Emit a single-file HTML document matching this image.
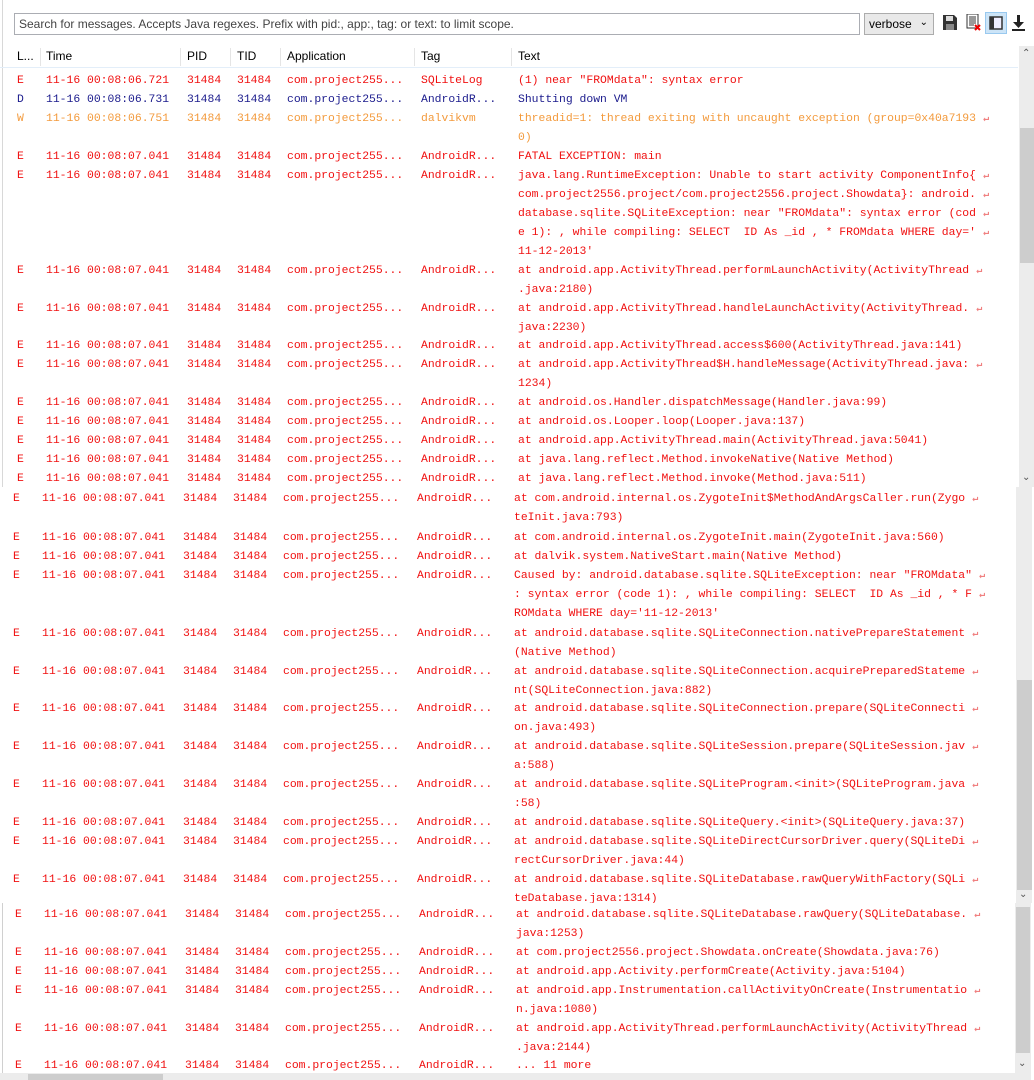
<!DOCTYPE html>
<html><head><meta charset="utf-8"><style>
*{margin:0;padding:0;box-sizing:border-box}
body{width:1034px;height:1080px;background:#fff;position:relative;overflow:hidden;font-family:"Liberation Mono",monospace;font-size:11.4px}
.ui{font-family:"Liberation Sans",sans-serif;font-size:12px;color:#000}
.p{position:absolute;left:0;width:1034px;overflow:hidden}
.r{position:absolute;left:0;width:1010px;line-height:19px;white-space:pre}
.r span{position:absolute;top:0}
.a{left:17px}.b{left:46px}.c{left:187px}.d{left:237px}.e{left:287px}.f{left:421px}.g{left:518px}
.E{color:#f01010}.D{color:#1a1a8c}.W{color:#f39a3c}
.w{color:#f08080;font-size:10px;margin-left:7px}
.sb{position:absolute;background:#ececec}
.th{position:absolute;background:#cdcdcd}
.ar{position:absolute;font-family:"Liberation Sans",sans-serif;font-size:10px;color:#555}
.rows{position:absolute;left:0;top:2px;width:1034px;height:100%}
</style></head><body>
<div class="ui" style="position:absolute;left:2px;top:0;width:1px;height:487px;background:#d8d8d8"></div>
<div class="ui" style="position:absolute;left:14px;top:13px;width:846px;height:22px;border:1px solid #abadb3;padding:2px 4px;line-height:16px;color:#444">Search for messages. Accepts Java regexes. Prefix with pid:, app:, tag: or text: to limit scope.</div>
<div class="ui" style="position:absolute;left:864px;top:13px;width:70px;height:22px;border:1px solid #acacac;background:#e9e9e9;padding:2px 4px;line-height:16px">verbose<span style="position:absolute;right:5px;top:1px;font-size:10px">&#8964;</span></div>
<svg style="position:absolute;left:943px;top:15px" width="14" height="15" viewBox="0 0 14 15"><path d="M0 0h11l3 3v12H0z" fill="#333"/><rect x="3" y="1" width="7" height="5" fill="#ddd"/><rect x="3" y="9" width="8" height="6" fill="#888"/></svg>
<svg style="position:absolute;left:966px;top:14px" width="16" height="18" viewBox="0 0 16 18"><rect x="1" y="0" width="11" height="14" fill="#fff" stroke="#333"/><path d="M3 3h7M3 5h7M3 7h7M3 9h7M3 11h5" stroke="#333"/><path d="M9 11l5 5M14 11l-5 5" stroke="#e00" stroke-width="2"/></svg>
<div style="position:absolute;left:985px;top:12px;width:22px;height:22px;background:#cce4f7;border:1px solid #99c9ef"></div>
<svg style="position:absolute;left:989px;top:16px" width="14" height="14" viewBox="0 0 14 14"><rect x="1" y="1" width="12" height="12" fill="#eef" stroke="#333" stroke-width="1.5"/><rect x="1" y="1" width="4" height="12" fill="#333"/></svg>
<svg style="position:absolute;left:1012px;top:15px" width="13" height="16" viewBox="0 0 13 16"><path d="M5 0h3v7h4l-5.5 6L1 7h4z" fill="#222"/><rect x="0" y="14" width="13" height="2" fill="#222"/></svg>

<div class="p" style="top:0;height:487px">
<div class="ui" style="position:absolute;top:46px;left:0;width:1018px;height:22px;border-bottom:1px solid #e3eef9;line-height:21px">
<span style="position:absolute;left:17px">L...</span><span style="position:absolute;left:46px">Time</span><span style="position:absolute;left:187px">PID</span><span style="position:absolute;left:237px">TID</span><span style="position:absolute;left:287px">Application</span><span style="position:absolute;left:421px">Tag</span><span style="position:absolute;left:518px">Text</span>
<i style="position:absolute;left:40px;top:2px;height:18px;border-left:1px solid #e5e5e5"></i><i style="position:absolute;left:180px;top:2px;height:18px;border-left:1px solid #e5e5e5"></i><i style="position:absolute;left:230px;top:2px;height:18px;border-left:1px solid #e5e5e5"></i><i style="position:absolute;left:280px;top:2px;height:18px;border-left:1px solid #e5e5e5"></i><i style="position:absolute;left:414px;top:2px;height:18px;border-left:1px solid #e5e5e5"></i><i style="position:absolute;left:511px;top:2px;height:18px;border-left:1px solid #e5e5e5"></i>
</div>
<div class="sb" style="left:1019px;top:46px;width:15px;height:441px"></div>
<div class="th" style="left:1020px;top:128px;width:14px;height:135px"></div>
<div class="ar" style="left:1022px;top:48px">&#8963;</div>
<div class="ar" style="left:1022px;top:472px">&#8964;</div>
<div class="rows">
<div class="r E" style="top:70px"><span class="a">E</span><span class="b">11-16 00:08:06.721</span><span class="c">31484</span><span class="d">31484</span><span class="e">com.project255...</span><span class="f">SQLiteLog</span><span class="g">(1) near "FROMdata": syntax error</span></div>
<div class="r D" style="top:89px"><span class="a">D</span><span class="b">11-16 00:08:06.731</span><span class="c">31484</span><span class="d">31484</span><span class="e">com.project255...</span><span class="f">AndroidR...</span><span class="g">Shutting down VM</span></div>
<div class="r W" style="top:108px"><span class="a">W</span><span class="b">11-16 00:08:06.751</span><span class="c">31484</span><span class="d">31484</span><span class="e">com.project255...</span><span class="f">dalvikvm</span><span class="g">threadid=1: thread exiting with uncaught exception (group=0x40a7193<b class="w">&#8629;</b>
0)</span></div>
<div class="r E" style="top:146px"><span class="a">E</span><span class="b">11-16 00:08:07.041</span><span class="c">31484</span><span class="d">31484</span><span class="e">com.project255...</span><span class="f">AndroidR...</span><span class="g">FATAL EXCEPTION: main</span></div>
<div class="r E" style="top:165px"><span class="a">E</span><span class="b">11-16 00:08:07.041</span><span class="c">31484</span><span class="d">31484</span><span class="e">com.project255...</span><span class="f">AndroidR...</span><span class="g">java.lang.RuntimeException: Unable to start activity ComponentInfo{<b class="w">&#8629;</b>
com.project2556.project/com.project2556.project.Showdata}: android.<b class="w">&#8629;</b>
database.sqlite.SQLiteException: near "FROMdata": syntax error (cod<b class="w">&#8629;</b>
e 1): , while compiling: SELECT  ID As _id , * FROMdata WHERE day='<b class="w">&#8629;</b>
11-12-2013'</span></div>
<div class="r E" style="top:260px"><span class="a">E</span><span class="b">11-16 00:08:07.041</span><span class="c">31484</span><span class="d">31484</span><span class="e">com.project255...</span><span class="f">AndroidR...</span><span class="g">at android.app.ActivityThread.performLaunchActivity(ActivityThread<b class="w">&#8629;</b>
.java:2180)</span></div>
<div class="r E" style="top:298px"><span class="a">E</span><span class="b">11-16 00:08:07.041</span><span class="c">31484</span><span class="d">31484</span><span class="e">com.project255...</span><span class="f">AndroidR...</span><span class="g">at android.app.ActivityThread.handleLaunchActivity(ActivityThread.<b class="w">&#8629;</b>
java:2230)</span></div>
<div class="r E" style="top:335px"><span class="a">E</span><span class="b">11-16 00:08:07.041</span><span class="c">31484</span><span class="d">31484</span><span class="e">com.project255...</span><span class="f">AndroidR...</span><span class="g">at android.app.ActivityThread.access$600(ActivityThread.java:141)</span></div>
<div class="r E" style="top:354px"><span class="a">E</span><span class="b">11-16 00:08:07.041</span><span class="c">31484</span><span class="d">31484</span><span class="e">com.project255...</span><span class="f">AndroidR...</span><span class="g">at android.app.ActivityThread$H.handleMessage(ActivityThread.java:<b class="w">&#8629;</b>
1234)</span></div>
<div class="r E" style="top:392px"><span class="a">E</span><span class="b">11-16 00:08:07.041</span><span class="c">31484</span><span class="d">31484</span><span class="e">com.project255...</span><span class="f">AndroidR...</span><span class="g">at android.os.Handler.dispatchMessage(Handler.java:99)</span></div>
<div class="r E" style="top:411px"><span class="a">E</span><span class="b">11-16 00:08:07.041</span><span class="c">31484</span><span class="d">31484</span><span class="e">com.project255...</span><span class="f">AndroidR...</span><span class="g">at android.os.Looper.loop(Looper.java:137)</span></div>
<div class="r E" style="top:430px"><span class="a">E</span><span class="b">11-16 00:08:07.041</span><span class="c">31484</span><span class="d">31484</span><span class="e">com.project255...</span><span class="f">AndroidR...</span><span class="g">at android.app.ActivityThread.main(ActivityThread.java:5041)</span></div>
<div class="r E" style="top:449px"><span class="a">E</span><span class="b">11-16 00:08:07.041</span><span class="c">31484</span><span class="d">31484</span><span class="e">com.project255...</span><span class="f">AndroidR...</span><span class="g">at java.lang.reflect.Method.invokeNative(Native Method)</span></div>
<div class="r E" style="top:468px"><span class="a">E</span><span class="b">11-16 00:08:07.041</span><span class="c">31484</span><span class="d">31484</span><span class="e">com.project255...</span><span class="f">AndroidR...</span><span class="g">at java.lang.reflect.Method.invoke(Method.java:511)</span></div>
</div>
</div>

<div class="p" style="top:487px;height:416px">
<div class="sb" style="left:1016px;top:0;width:16px;height:416px"></div>
<div class="th" style="left:1017px;top:193px;width:15px;height:210px"></div>
<div class="ar" style="left:1019px;top:402px">&#8964;</div>
<div class="rows" style="left:-4px">
<div class="r E" style="top:1px"><span class="a">E</span><span class="b">11-16 00:08:07.041</span><span class="c">31484</span><span class="d">31484</span><span class="e">com.project255...</span><span class="f">AndroidR...</span><span class="g">at com.android.internal.os.ZygoteInit$MethodAndArgsCaller.run(Zygo<b class="w">&#8629;</b>
teInit.java:793)</span></div>
<div class="r E" style="top:40px"><span class="a">E</span><span class="b">11-16 00:08:07.041</span><span class="c">31484</span><span class="d">31484</span><span class="e">com.project255...</span><span class="f">AndroidR...</span><span class="g">at com.android.internal.os.ZygoteInit.main(ZygoteInit.java:560)</span></div>
<div class="r E" style="top:59px"><span class="a">E</span><span class="b">11-16 00:08:07.041</span><span class="c">31484</span><span class="d">31484</span><span class="e">com.project255...</span><span class="f">AndroidR...</span><span class="g">at dalvik.system.NativeStart.main(Native Method)</span></div>
<div class="r E" style="top:78px"><span class="a">E</span><span class="b">11-16 00:08:07.041</span><span class="c">31484</span><span class="d">31484</span><span class="e">com.project255...</span><span class="f">AndroidR...</span><span class="g">Caused by: android.database.sqlite.SQLiteException: near "FROMdata"<b class="w">&#8629;</b>
: syntax error (code 1): , while compiling: SELECT  ID As _id , * F<b class="w">&#8629;</b>
ROMdata WHERE day='11-12-2013'</span></div>
<div class="r E" style="top:136px"><span class="a">E</span><span class="b">11-16 00:08:07.041</span><span class="c">31484</span><span class="d">31484</span><span class="e">com.project255...</span><span class="f">AndroidR...</span><span class="g">at android.database.sqlite.SQLiteConnection.nativePrepareStatement<b class="w">&#8629;</b>
(Native Method)</span></div>
<div class="r E" style="top:174px"><span class="a">E</span><span class="b">11-16 00:08:07.041</span><span class="c">31484</span><span class="d">31484</span><span class="e">com.project255...</span><span class="f">AndroidR...</span><span class="g">at android.database.sqlite.SQLiteConnection.acquirePreparedStateme<b class="w">&#8629;</b>
nt(SQLiteConnection.java:882)</span></div>
<div class="r E" style="top:211px"><span class="a">E</span><span class="b">11-16 00:08:07.041</span><span class="c">31484</span><span class="d">31484</span><span class="e">com.project255...</span><span class="f">AndroidR...</span><span class="g">at android.database.sqlite.SQLiteConnection.prepare(SQLiteConnecti<b class="w">&#8629;</b>
on.java:493)</span></div>
<div class="r E" style="top:249px"><span class="a">E</span><span class="b">11-16 00:08:07.041</span><span class="c">31484</span><span class="d">31484</span><span class="e">com.project255...</span><span class="f">AndroidR...</span><span class="g">at android.database.sqlite.SQLiteSession.prepare(SQLiteSession.jav<b class="w">&#8629;</b>
a:588)</span></div>
<div class="r E" style="top:287px"><span class="a">E</span><span class="b">11-16 00:08:07.041</span><span class="c">31484</span><span class="d">31484</span><span class="e">com.project255...</span><span class="f">AndroidR...</span><span class="g">at android.database.sqlite.SQLiteProgram.&lt;init&gt;(SQLiteProgram.java<b class="w">&#8629;</b>
:58)</span></div>
<div class="r E" style="top:325px"><span class="a">E</span><span class="b">11-16 00:08:07.041</span><span class="c">31484</span><span class="d">31484</span><span class="e">com.project255...</span><span class="f">AndroidR...</span><span class="g">at android.database.sqlite.SQLiteQuery.&lt;init&gt;(SQLiteQuery.java:37)</span></div>
<div class="r E" style="top:344px"><span class="a">E</span><span class="b">11-16 00:08:07.041</span><span class="c">31484</span><span class="d">31484</span><span class="e">com.project255...</span><span class="f">AndroidR...</span><span class="g">at android.database.sqlite.SQLiteDirectCursorDriver.query(SQLiteDi<b class="w">&#8629;</b>
rectCursorDriver.java:44)</span></div>
<div class="r E" style="top:382px"><span class="a">E</span><span class="b">11-16 00:08:07.041</span><span class="c">31484</span><span class="d">31484</span><span class="e">com.project255...</span><span class="f">AndroidR...</span><span class="g">at android.database.sqlite.SQLiteDatabase.rawQueryWithFactory(SQLi<b class="w">&#8629;</b>
teDatabase.java:1314)</span></div>
</div>
</div>

<div class="p" style="top:903px;height:177px">
<div style="position:absolute;left:2px;top:0;width:1px;height:177px;background:#d0d0d0"></div>
<div class="sb" style="left:1015px;top:0;width:16px;height:177px"></div>
<div class="th" style="left:1016px;top:4px;width:14px;height:146px"></div>
<div class="ar" style="left:1018px;top:155px">&#8964;</div>
<div style="position:absolute;left:0;top:170px;width:1015px;height:7px;background:#ececec"></div>
<div style="position:absolute;left:28px;top:171px;width:135px;height:6px;background:#cdcdcd"></div>
<div class="rows" style="left:-2px">
<div class="r E" style="top:1px"><span class="a">E</span><span class="b">11-16 00:08:07.041</span><span class="c">31484</span><span class="d">31484</span><span class="e">com.project255...</span><span class="f">AndroidR...</span><span class="g">at android.database.sqlite.SQLiteDatabase.rawQuery(SQLiteDatabase.<b class="w">&#8629;</b>
java:1253)</span></div>
<div class="r E" style="top:39px"><span class="a">E</span><span class="b">11-16 00:08:07.041</span><span class="c">31484</span><span class="d">31484</span><span class="e">com.project255...</span><span class="f">AndroidR...</span><span class="g">at com.project2556.project.Showdata.onCreate(Showdata.java:76)</span></div>
<div class="r E" style="top:58px"><span class="a">E</span><span class="b">11-16 00:08:07.041</span><span class="c">31484</span><span class="d">31484</span><span class="e">com.project255...</span><span class="f">AndroidR...</span><span class="g">at android.app.Activity.performCreate(Activity.java:5104)</span></div>
<div class="r E" style="top:77px"><span class="a">E</span><span class="b">11-16 00:08:07.041</span><span class="c">31484</span><span class="d">31484</span><span class="e">com.project255...</span><span class="f">AndroidR...</span><span class="g">at android.app.Instrumentation.callActivityOnCreate(Instrumentatio<b class="w">&#8629;</b>
n.java:1080)</span></div>
<div class="r E" style="top:115px"><span class="a">E</span><span class="b">11-16 00:08:07.041</span><span class="c">31484</span><span class="d">31484</span><span class="e">com.project255...</span><span class="f">AndroidR...</span><span class="g">at android.app.ActivityThread.performLaunchActivity(ActivityThread<b class="w">&#8629;</b>
.java:2144)</span></div>
<div class="r E" style="top:152px"><span class="a">E</span><span class="b">11-16 00:08:07.041</span><span class="c">31484</span><span class="d">31484</span><span class="e">com.project255...</span><span class="f">AndroidR...</span><span class="g">... 11 more</span></div>
</div>
</div>
</body></html>
